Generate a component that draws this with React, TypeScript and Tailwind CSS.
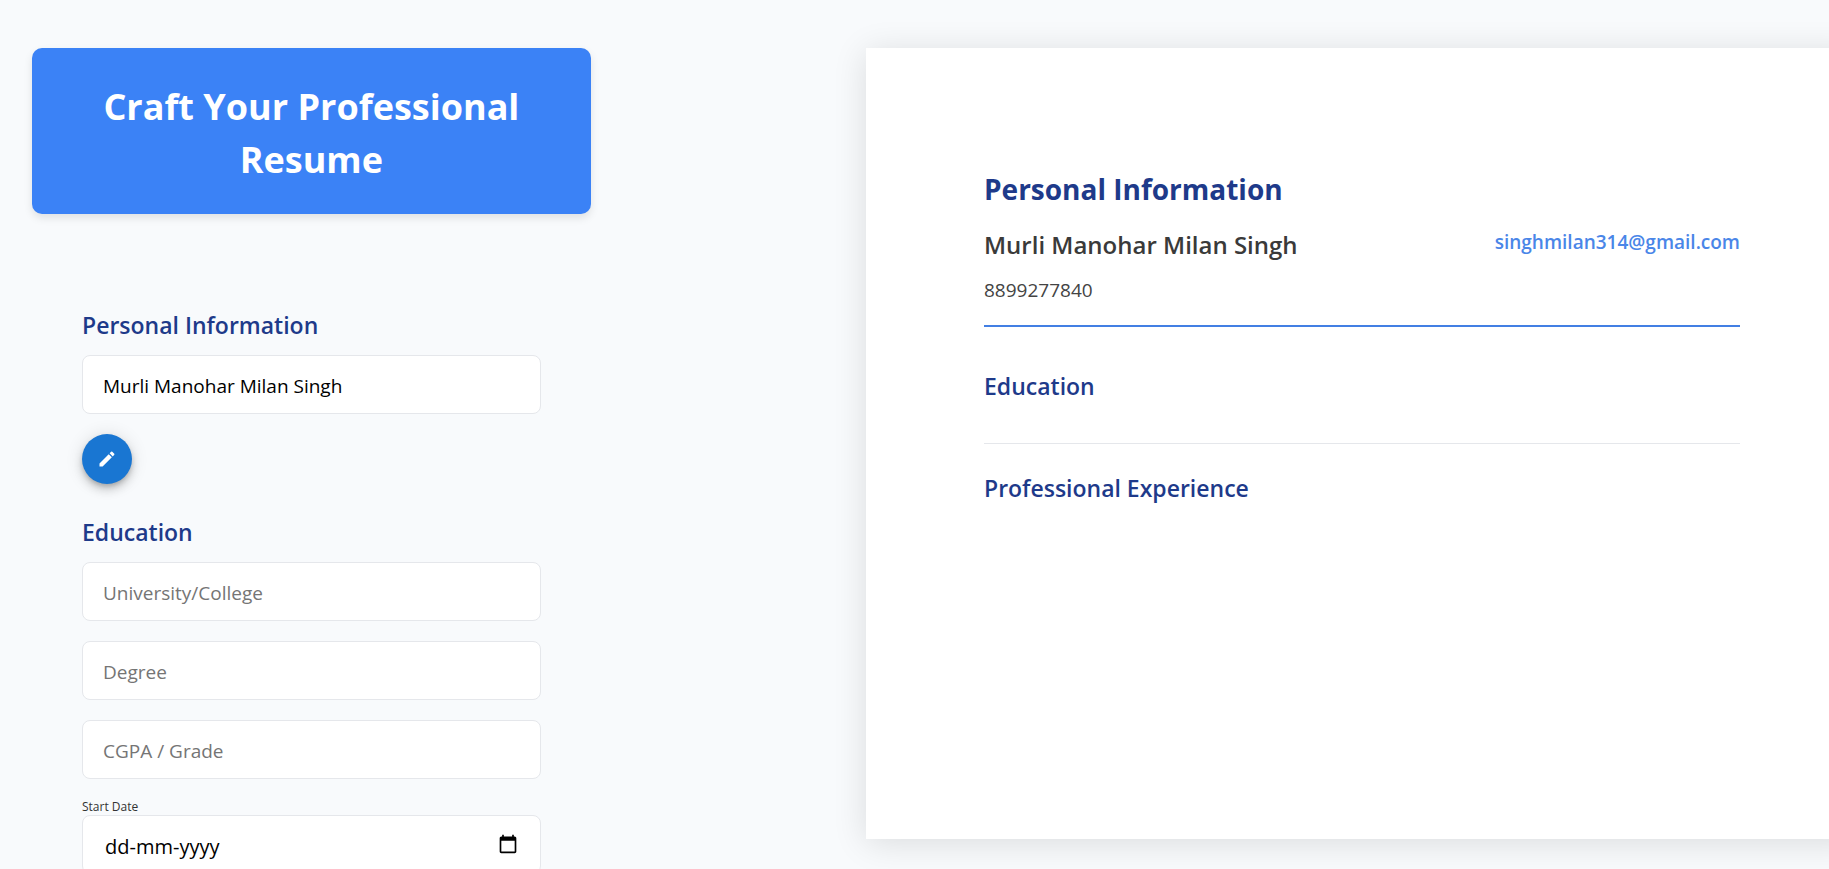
import React from "react";

const fieldClass =
  "h-[59px] w-full rounded-lg border border-gray-200 bg-white px-5 pt-0.5 text-[19px] text-black placeholder:text-[#757575] outline-none";
const headingClass = "text-[23px] leading-8 font-semibold text-[#1e3a8a]";

function PencilIcon() {
  return (
    <svg viewBox="0 0 24 24" className="size-5 fill-white" aria-hidden="true">
      <path d="M3 17.25V21h3.75L17.81 9.94l-3.75-3.75L3 17.25zM20.71 7.04c.39-.39.39-1.02 0-1.41l-2.34-2.34a.9959.9959 0 0 0-1.41 0l-1.83 1.83 3.75 3.75 1.83-1.83z" />
    </svg>
  );
}

function CalendarIcon() {
  return (
    <svg viewBox="0 0 24 24" className="size-5 fill-black" aria-hidden="true">
      <path d="M20 3h-1V1h-2v2H7V1H5v2H4c-1.1 0-2 .9-2 2v16c0 1.1.9 2 2 2h16c1.1 0 2-.9 2-2V5c0-1.1-.9-2-2-2zm0 18H4V8h16v13z" />
    </svg>
  );
}

function Editor() {
  return (
    <div className="w-[67%]">
      <h1 className="rounded-[10px] bg-[#3b82f6] px-8 pt-8 pb-7 text-center text-[36px] leading-[53px] font-bold text-white shadow-[0_4px_8px_rgba(0,0,0,0.1)]">
        Craft Your Professional Resume
      </h1>
      <form className="px-[50px] pt-[95px]">
        <section className="mb-8">
          <h2 className={`${headingClass} mb-[14px]`}>Personal Information</h2>
          <input
            className={fieldClass}
            aria-label="Full name"
            defaultValue="Murli Manohar Milan Singh"
          />
          <button
            type="button"
            aria-label="Edit"
            className="mt-5 flex size-[50px] items-center justify-center rounded-full bg-[#1976d2] shadow-[0_3px_5px_-1px_rgba(0,0,0,0.2),0_6px_10px_rgba(0,0,0,0.14),0_1px_18px_rgba(0,0,0,0.12)]"
          >
            <PencilIcon />
          </button>
        </section>
        <section>
          <h2 className={`${headingClass} mb-[14px]`}>Education</h2>
          <div className="flex flex-col gap-5">
            <input className={fieldClass} aria-label="University/College" placeholder="University/College" />
            <input className={fieldClass} aria-label="Degree" placeholder="Degree" />
            <input className={fieldClass} aria-label="CGPA / Grade" placeholder="CGPA / Grade" />
            <div>
              <label htmlFor="start" className="block text-xs leading-4 text-[#333333]">
                Start Date
              </label>
              <div className="flex h-[59px] items-center rounded-lg border border-gray-200 bg-white pr-[22px] pb-0.5 pl-[22px]">
                <input
                  id="start"
                  className="min-w-0 flex-1 pt-1.5 text-[20px] outline-none placeholder:text-black"
                  placeholder="dd-mm-yyyy"
                />
                <button type="button" aria-label="Open calendar">
                  <CalendarIcon />
                </button>
              </div>
            </div>
          </div>
        </section>
      </form>
    </div>
  );
}

function Preview() {
  return (
    <article className="bg-white px-[118px] pt-[121px] shadow-[0_4px_32px_rgba(0,0,0,0.12)]">
      <header className="border-b-2 border-[#437fe3] pb-[21px]">
        <h2 className="mb-[19px] text-[28px] leading-10 font-bold text-[#1e3a8a]">Personal Information</h2>
        <div className="flex items-start justify-between">
          <div>
            <p className="text-[24px] leading-[34px] font-semibold text-[#3a3a3a]">Murli Manohar Milan Singh</p>
            <p className="mt-[14px] text-[19px] leading-7 text-[#444444]">8899277840</p>
          </div>
          <a href="mailto:singhmilan314@gmail.com" className="text-[19px] leading-7 font-semibold text-[#4a86e8]">
            singhmilan314@gmail.com
          </a>
        </div>
      </header>
      <section className="border-b border-gray-200 pt-[43px] pb-[41px]">
        <h3 className={headingClass}>Education</h3>
      </section>
      <section className="pt-7">
        <h3 className={headingClass}>Professional Experience</h3>
      </section>
    </article>
  );
}

export default function App() {
  return (
    <main className="h-screen overflow-hidden bg-[#f8fafc] font-['Open_Sans',sans-serif]">
      <div className="-mr-[29px] grid h-full grid-cols-[834fr_992fr] grid-rows-[minmax(0,1fr)] pt-12 pb-[30px] pl-8">
        <Editor />
        <Preview />
      </div>
    </main>
  );
}
